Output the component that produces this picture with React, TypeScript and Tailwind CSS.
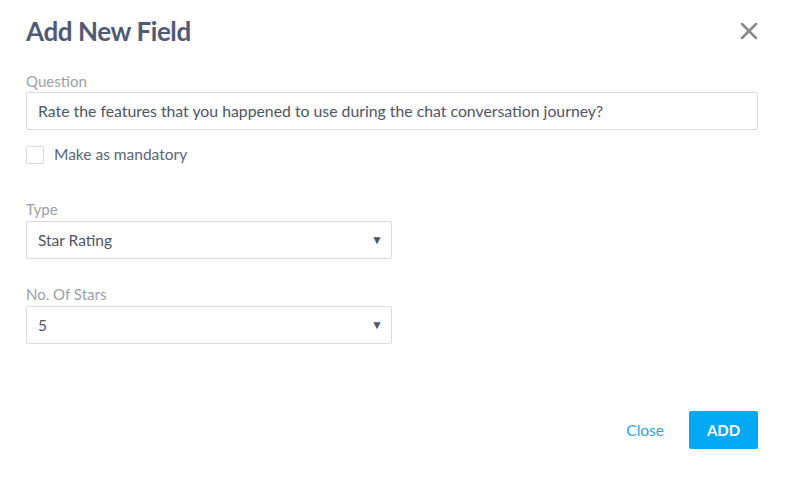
import { X } from "lucide-react";

const font = { fontFamily: "Lato, 'Noto Sans', sans-serif" };

function Select({ value }: { value: string }) {
  return (
    <div className="flex h-[38px] w-[366px] items-center justify-between rounded-[2px] border border-[#dcdcdc] pl-[11px] pr-[8px] text-[15.5px] text-[#4d5566]">
      <span>{value}</span>
      <span className="text-[12px] text-[#4d5566]">▼</span>
    </div>
  );
}

export default function App() {
  return (
    <div className="h-[478px] w-[785px] bg-white" style={font}>
      <div className="flex items-start justify-between pl-[26px] pr-[22px] pt-[14px]">
        <h1 className="text-[26px] font-bold leading-[34px] tracking-[-0.4px] text-[#4f5b73]">Add New Field</h1>
        <button type="button" className="mt-[3px] text-[#8a8a8a]" aria-label="Close">
          <X size={28} strokeWidth={2.2} />
        </button>
      </div>

      <div className="px-[26px] pt-[23px]">
        <div className="text-[15px] leading-[20px] text-[#9b9fa6]">Question</div>
        <div className="mt-[1px] flex h-[38px] w-[732px] items-center rounded-[2px] border border-[#dcdcdc] pl-[11px] text-[15.8px] text-[#4d5566]">
          Rate the features that you happened to use during the chat conversation journey?
        </div>
        <label className="mt-[13px] flex items-center gap-[10px]">
          <span className="h-[18px] w-[18px] rounded-[1px] border border-[#dcdcdc]" />
          <span className="text-[15.5px] text-[#5b6478]">Make as mandatory</span>
        </label>

        <div className="mt-[33px] text-[15px] leading-[20px] text-[#9b9fa6]">Type</div>
        <div className="mt-[2px]">
          <Select value="Star Rating" />
        </div>

        <div className="mt-[25px] text-[15px] leading-[20px] text-[#9b9fa6]">No. Of Stars</div>
        <div className="mt-[2px]">
          <Select value="5" />
        </div>
      </div>

      <div className="flex items-center justify-end gap-[25px] pr-[27px] pt-[67px]">
        <button type="button" className="text-[15.5px] text-[#2ea3e3]">Close</button>
        <button type="button" className="h-[38px] w-[69px] rounded-[2px] bg-[#03a9f4] text-[15px] font-bold text-white">ADD</button>
      </div>
    </div>
  );
}
